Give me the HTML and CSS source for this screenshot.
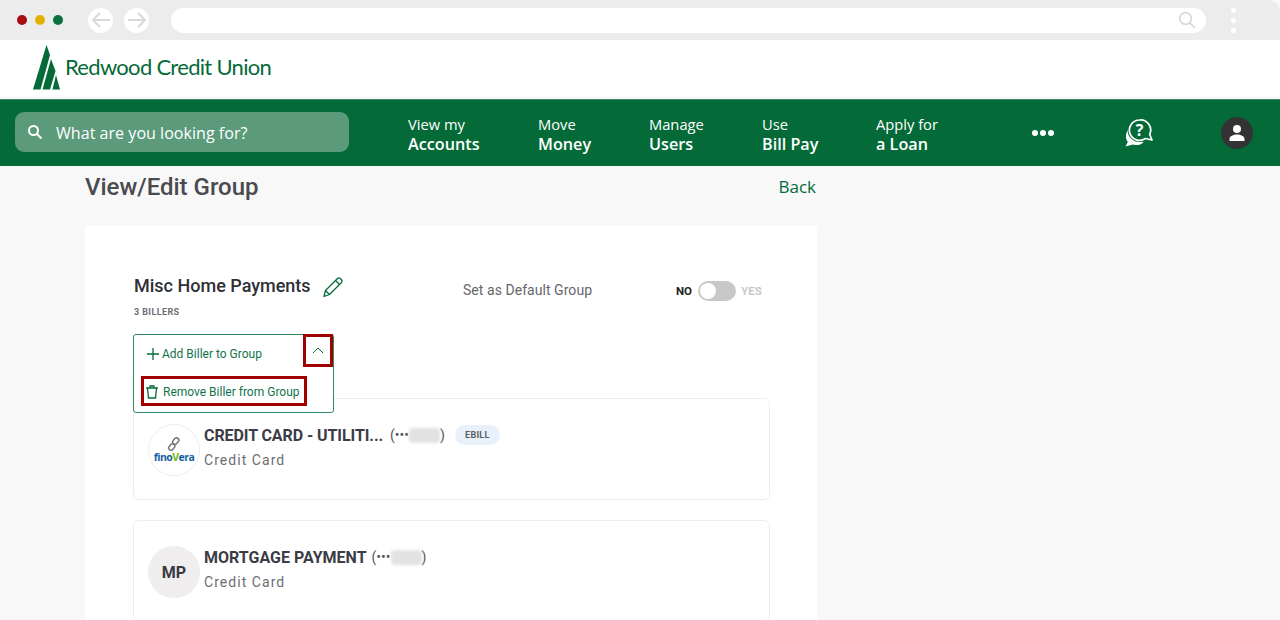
FILE: index.html
```html
<!DOCTYPE html>
<html lang="en">
<head>
<meta charset="utf-8">
<title>View/Edit Group</title>
<link rel="stylesheet" href="styles.css">
</head>
<body>
<div class="chrome">
  <div class="lights"><span class="light red"></span><span class="light yellow"></span><span class="light green"></span></div>
  <div class="arrows">
    <span class="arrow"><svg width="26" height="26" viewBox="0 0 26 26" fill="none" stroke="#d9d9d9" stroke-width="2"><path d="M22 13H5M12 6l-7 7 7 7"/></svg></span>
    <span class="arrow"><svg width="26" height="26" viewBox="0 0 26 26" fill="none" stroke="#d9d9d9" stroke-width="2"><path d="M4 13h17M14 6l7 7-7 7"/></svg></span>
  </div>
  <div class="urlbar"><svg width="18" height="18" viewBox="0 0 18 18" fill="none" stroke="#d9d9d9" stroke-width="1.8"><circle cx="7.5" cy="7.5" r="5.8"/><path d="M11.8 11.8l5 5"/></svg></div>
  <div class="kebab"><span></span><span></span><span></span></div>
</div>
<header class="brand">
  <svg class="tree" width="28" height="45" viewBox="0 0 28 45" fill="#046a38"><path d="M13.5 0 0 44.5h7.500L17 10z"/><path d="M18 14 9.500 44.500h7.500L22.500 26z"/><path d="M23 30 19.500 44.500h7.500z"/></svg>
  <span class="brand-name">Redwood Credit Union</span>
</header>
<nav class="nav">
  <div class="search">
    <svg width="16" height="16" viewBox="0 0 16 16" fill="none" stroke="#fff" stroke-width="2"><circle cx="6.5" cy="6.5" r="4.5"/><path d="M10 10l4.5 4.5"/></svg>
    <span>What are you looking for?</span>
  </div>
  <div class="menu">
    <a class="item"><span>View my</span><b>Accounts</b></a>
    <a class="item"><span>Move</span><b>Money</b></a>
    <a class="item"><span>Manage</span><b>Users</b></a>
    <a class="item"><span>Use</span><b>Bill Pay</b></a>
    <a class="item"><span>Apply for</span><b>a Loan</b></a>
    <div class="dots"><i></i><i></i><i></i></div>
    <div class="help"><svg width="28" height="28" viewBox="0 0 28 28"><path d="M3.500 10C.5 14 0 19.500 2.800 23L.5 27.500l7.500-2c3.500 1.200 7.500 .5 10.500-2z" fill="#fff"/><circle cx="14.500" cy="11" r="12" fill="#046a38"/><path d="M14.500 1a10.200 10.200 0 1 0 6 18.500l6.500 1.500-2.300-5.500A10.200 10.200 0 0 0 14.500 1z" fill="#046a38" stroke="#fff" stroke-width="1.700" stroke-linejoin="round"/><text x="14.500" y="16.500" text-anchor="middle" class="q">?</text></svg></div>
    <div class="avatar"><svg width="18" height="18" viewBox="0 0 18 18" fill="#fff"><circle cx="9" cy="5" r="4"/><path d="M1.500 17v-2c0-3 4-4.500 7.500-4.500s7.500 1.500 7.500 4.500v2z"/></svg></div>
  </div>
</nav>
<main class="page">
  <div class="page-head">
    <h1>View/Edit Group</h1>
    <a class="back">Back</a>
  </div>
  <section class="card">
    <div class="group-head">
      <div class="group-title">
        <div class="title-line">
          <h2>Misc Home Payments</h2>
          <svg width="22" height="22" viewBox="0 0 22 22" fill="none" stroke="#046a38" stroke-width="1.300" stroke-linejoin="round"><path d="M2 20.500 3.500 14.500 15.500 2.500a2 2 0 0 1 2.800 0l1.200 1.200a2 2 0 0 1 0 2.800L7.500 18.500z"/><path d="M13.500 4.500l4 4M3.500 14.500l4 4"/></svg>
        </div>
        <div class="count">3 BILLERS</div>
      </div>
      <div class="default-label">Set as Default Group</div>
      <div class="toggle"><b>NO</b><span class="switch"><span class="knob"></span></span><em>YES</em></div>
    </div>
    <div class="actions">
      <div class="dropdown">
        <div class="drop-row first">
          <svg width="12" height="12" viewBox="0 0 12 12" stroke="#046a38" stroke-width="1.300"><path d="M6 0v12M0 6h12"/></svg>
          <span>Add Biller to Group</span>
          <span class="chev"><svg width="12" height="7" viewBox="0 0 12 7" fill="none" stroke="#046a38" stroke-width="1"><path d="M1 6l5-5 5 5"/></svg></span>
        </div>
        <div class="drop-row second">
          <span class="remove"><svg width="12" height="14" viewBox="0 0 12 14" fill="none" stroke="#046a38" stroke-width="1.300"><path d="M0 3h12M4 3V1h4v2M1.500 3l1 10h7l1-10"/></svg><span>Remove Biller from Group</span></span>
        </div>
      </div>
    </div>
    <div class="biller one">
      <div class="logo"><svg width="14" height="14" viewBox="0 0 14 14" fill="none" stroke="#777" stroke-width="1.500"><rect x="6.500" y="0.500" width="4.500" height="7" rx="2.200" transform="rotate(40 8.700 4)"/><rect x="2.500" y="6.500" width="4.500" height="7" rx="2.200" transform="rotate(40 4.700 10)"/></svg><span class="fino">fino<u>V</u>era</span></div>
      <div class="info">
        <div class="name"><b>CREDIT CARD - UTILITI...</b><span class="acct">(•••<i class="blur"></i>)</span><span class="ebill">EBILL</span></div>
        <div class="type">Credit Card</div>
      </div>
    </div>
    <div class="biller two">
      <div class="logo mp">MP</div>
      <div class="info">
        <div class="name"><b>MORTGAGE PAYMENT</b><span class="acct">(•••<i class="blur"></i>)</span></div>
        <div class="type">Credit Card</div>
      </div>
    </div>
  </section>
</main>
</body>
</html>
```
FILE: styles.css
```css
* { box-sizing: border-box; }
html, body { margin: 0; height: 620px; overflow: hidden; }
body { background: #f8f8f8; font-family: Roboto, "Liberation Sans", sans-serif; color: #3a3a42; }
svg { display: block; flex: none; }

.chrome { height: 40px; background: #ececec; display: flex; align-items: center; padding-left: 17px; border-radius: 0 12px 0 0; }
.lights { display: flex; gap: 8px; width: 71px; }
.light { width: 10px; height: 10px; border-radius: 50%; }
.red { background: #a80d12; }
.yellow { background: #e2b203; }
.green { background: #0b7040; }
.arrows { display: flex; gap: 11px; width: 83px; }
.arrow { width: 25px; height: 25px; border-radius: 50%; background: #fff; display: flex; align-items: center; justify-content: center; }
.urlbar { width: 1035px; height: 25px; background: #fff; border-radius: 13px; display: flex; align-items: center; justify-content: flex-end; padding-right: 10px; }
.kebab { display: flex; flex-direction: column; gap: 5px; margin-left: 25px; }
.kebab span { width: 5px; height: 5px; border-radius: 50%; background: #fff; }

.brand { height: 59px; background: #fff; display: flex; align-items: flex-start; padding: 5px 0 0 33px; }
.brand-name { font-family: "Lato", sans-serif; font-size: 22px; color: #046a38; letter-spacing: -0.7px; margin: 11px 0 0 4px; line-height: 22px; }

.nav { height: 67px; background: #046a38; display: flex; align-items: center; padding-left: 15px; border-top: 1px solid #3f8a66; box-shadow: 0 -2px 3px rgba(0,0,0,.05); }
.search { width: 334px; height: 40px; margin-top: -2px; padding: 2px 0 0 12px; border-radius: 9px; background: #5b9a7a; display: flex; align-items: center; gap: 13px; color: #fff; font-family: "Open Sans", sans-serif; font-size: 16.100px; }
.search svg { margin-top: -2px; }
.menu { display: grid; grid-template-columns: 130px 111px 113px 114px 156px 93px 96px 32px; margin-left: 59px; align-items: center; }
.item { display: flex; flex-direction: column; color: #fff; font-family: "Open Sans", sans-serif; font-size: 14.700px; line-height: 19px; padding-top: 2px; }
.item b { font-size: 16.200px; font-weight: 600; margin-top: 1px; }
.dots { display: flex; gap: 2px; }
.dots i { width: 6px; height: 6px; border-radius: 50%; background: #fff; }
.q { font-family: "Open Sans", sans-serif; font-size: 16px; font-weight: 700; fill: #fff; }
.avatar { width: 32px; height: 32px; border-radius: 50%; background: #333; display: flex; align-items: center; justify-content: center; }

.page { padding-left: 85px; width: 817px; }
.page-head { height: 60px; display: flex; justify-content: space-between; align-items: flex-start; padding-right: 1px; }
.page-head h1 { margin: 5px 0 0; font-family: Roboto, sans-serif; font-size: 24px; font-weight: 500; color: #4a4a4f; line-height: 32px; }
.back { margin-top: 10px; font-family: "Open Sans", sans-serif; font-size: 17px; color: #046a38; line-height: 22px; }
.card { position: relative; background: #fff; height: 420px; padding: 46px 47px 0 48px; }

.group-head { display: flex; align-items: flex-start; height: 62px; }
.group-title { width: 330px; }
.title-line { display: flex; align-items: center; gap: 12px; height: 26px; padding-left: 1px; }
.title-line h2 { margin: 0; font-size: 18px; font-weight: 500; color: #2f2f36; }
.title-line svg { margin-top: 4px; margin-left: -1px; }
.count { font-size: 9px; font-weight: 700; color: #6d6d72; letter-spacing: 0.400px; margin: 9px 0 0 1px; }
.default-label { width: 213px; margin-top: 10px; font-size: 14px; color: #66666b; letter-spacing: 0.050px; }
.toggle { display: flex; align-items: center; gap: 6px; margin-top: 9px; font-size: 11.500px; }
.toggle b { color: #222; }
.toggle em { font-style: normal; font-weight: 700; color: #c8c8c8; margin-left: -1px; }
.switch { width: 38px; height: 20px; background: #c8c8c8; border-radius: 10px; padding: 2px; display: block; }
.knob { display: block; width: 16px; height: 16px; background: #fff; border-radius: 50%; }

.actions { position: absolute; left: 48px; top: 108px; z-index: 2; }
.dropdown { width: 201px; height: 79px; background: #fff; border: 1px solid #2f8a60; border-radius: 3px; color: #12734a; font-size: 12px; }
.drop-row { display: flex; align-items: center; }
.first { height: 38px; padding-left: 13px; gap: 3px; position: relative; }
.chev { position: absolute; left: 169px; top: -1px; width: 30px; height: 33px; border: 3px solid #a00000; display: flex; align-items: center; justify-content: center; }
.second { padding-left: 7px; margin-top: 3px; }
.remove { width: 166px; height: 30px; border: 3px solid #a00000; display: flex; align-items: center; gap: 5px; padding: 2px 0 0 2px; white-space: nowrap; }

.biller { width: 637px; height: 102px; background: #fff; border: 1px solid #eeeeee; border-radius: 6px; display: flex; gap: 4px; padding: 25px 0 0 14px; }
.one { margin-top: 64px; }
.two { margin-top: 20px; }
.logo { width: 52px; height: 52px; flex: none; border-radius: 50%; border: 1px solid #eee; display: flex; flex-direction: column; align-items: center; justify-content: center; }
.fino { font-family: "Open Sans", sans-serif; font-size: 10.500px; font-weight: 700; color: #14609f; letter-spacing: -0.550px; line-height: 12px; }
.fino u { color: #7ab800; text-decoration: none; }
.mp { background: #efeded; border: 0; font-size: 16px; font-weight: 700; color: #3a3a42; }
.name { display: flex; align-items: center; height: 20px; margin-top: 1px; }
.name b { font-size: 16px; font-weight: 700; color: #3c3c46; }
.one .name b { letter-spacing: -0.080px; }
.acct { display: flex; align-items: center; font-size: 14px; color: #55555c; margin-left: 5px; }
.one .acct { margin-left: 7px; }
.blur { display: block; width: 31px; height: 15px; background: #e2e2e2; border-radius: 4px; filter: blur(1.500px); }
.ebill { margin-left: 10px; height: 20px; width: 45px; border-radius: 10px; background: #e8f1fa; font-size: 9px; font-weight: 700; letter-spacing: 0.300px; color: #5c6066; display: flex; align-items: center; justify-content: center; }
.type { margin-top: 7px; font-size: 14px; color: #6e6e72; letter-spacing: 1.050px; }
```
